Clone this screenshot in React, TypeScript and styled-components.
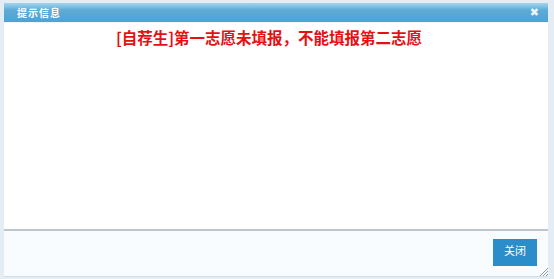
import React from "react";
import styled, { createGlobalStyle } from "styled-components";

const Global = createGlobalStyle`
  html, body { margin: 0; padding: 0; background: #ffffff; }
  body { font-family: "Noto Sans CJK SC", "Noto Sans", sans-serif; }
`;

const Frame = styled.div`
  width: 554px;
  height: 279px;
  box-sizing: border-box;
  background: #e4edf3;
  padding: 3px 6px 2px 4px;
  display: flex;
  flex-direction: column;
  position: relative;
`;

const TitleBar = styled.div`
  height: 19px;
  display: flex;
  align-items: center;
  justify-content: space-between;
  padding: 0 9px 0 13px;
  background: linear-gradient(#a3d3ee 0px, #86c4e6 3px, #5eabd7 7px, #4ea2d2 100%);
  color: #ffffff;
`;

const Title = styled.span`
  font-size: 10px;
  font-weight: bold;
  letter-spacing: 1px;
  line-height: 1;
`;

const Close = styled.span`
  font-family: "DejaVu Sans", sans-serif;
  font-size: 11px;
  font-weight: bold;
  line-height: 1;
  color: #eef7fc;
`;

const Body = styled.div`
  flex: 1;
  background: #ffffff;
  border-top: 1px solid #f2f6f9;
  border-bottom: 2px solid #bcc6cd;
  display: flex;
  justify-content: center;
  align-items: flex-start;
  padding: 5px 14px 0 0;
`;

const Message = styled.div`
  color: #e60f14;
  font-size: 15.5px;
  font-weight: bold;
  line-height: 18px;
`;

const Footer = styled.div`
  height: 46px;
  background: #f9fcfe;
  display: flex;
  justify-content: flex-end;
  align-items: flex-start;
  padding: 8px 11px 0 0;
  box-sizing: border-box;
  border-bottom: 1px solid #d2dde5;
`;

const Button = styled.div`
  width: 44px;
  height: 27px;
  background: #2b8dc9;
  color: #ffffff;
  font-size: 11px;
  display: flex;
  align-items: center;
  justify-content: center;
  padding-bottom: 6px;
  box-sizing: border-box;
`;

const Grip = styled.svg`
  position: absolute;
  right: 6px;
  bottom: 3px;
`;

export default function App() {
  return (
    <>
      <Global />
      <Frame>
        <TitleBar>
          <Title>提示信息</Title>
          <Close>✖</Close>
        </TitleBar>
        <Body>
          <Message>[自荐生]第一志愿未填报，不能填报第二志愿</Message>
        </Body>
        <Footer>
          <Button>关闭</Button>
        </Footer>
        <Grip width="9" height="9" viewBox="0 0 9 9">
          <path d="M1 9 L9 1 M4 9 L9 4 M7 9 L9 7" stroke="#8a98a3" strokeWidth="1" />
        </Grip>
      </Frame>
    </>
  );
}
